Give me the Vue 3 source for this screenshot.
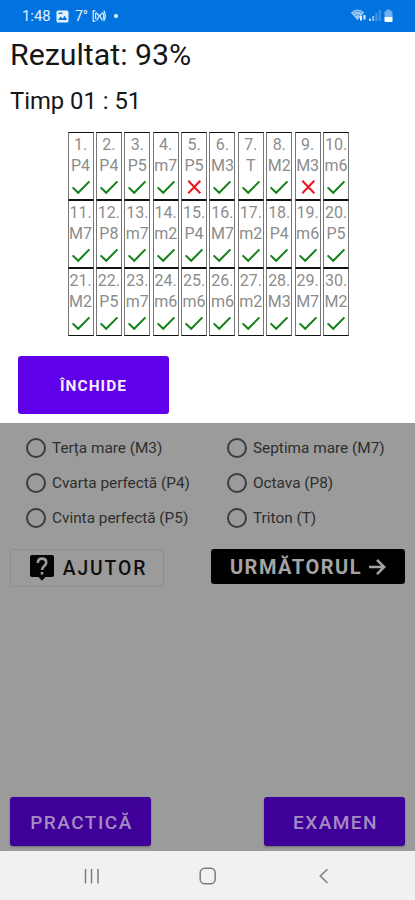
<template>
    <div class="screen">
        <header class="status-bar">
            <span class="time">1:48</span>
            <svg class="picture" viewBox="0 0 13 13">
                <rect x="0.5" y="0.5" width="12" height="12" rx="1.5" fill="#e6f0fb" />
                <path d="M2 10 L4.6 6.6 L6.6 8.8 L8.6 5.8 L11.2 10 Z" fill="#0073df" />
                <rect x="2.5" y="2.6" width="4" height="1.4" fill="#0073df" />
            </svg>
            <span class="degrees">7°</span>
            <svg class="cast" viewBox="0 0 15 12">
                <g fill="none" stroke="#d5e7fa" stroke-width="1.3">
                    <path d="M3.4 1 H1.2 V11 H3.4 M11.6 1 H12 Q14.8 6 11.6 11 M3.6 3 V9 M11 3 Q12.4 6 11 9" />
                    <path d="M4.6 10.5 L7.5 5.6 L10.4 10.5 M4 2.4 L7.5 6 L11 2.4" />
                </g>
            </svg>
            <span class="dot"></span>
            <svg class="signals" viewBox="0 0 46 16">
                <path d="M0.8 4.6 Q7.5 -1.8 14.2 4.6 L7.5 12.2 Z" fill="#9ccaf4" />
                <path d="M2.8 5.2 Q7.5 1.2 12.2 5.2 M4.8 7.6 Q7.5 5.4 10.2 7.6" fill="none" stroke="#3d93e6" stroke-width="1" />
                <path d="M11 8 V12.5 M14.5 7 V11.5" stroke="#e6f1fd" stroke-width="2" />
                <path d="M20 10.5 V13" stroke="#b9d8f7" stroke-width="2" />
                <path d="M23.2 8 V13" stroke="#8dc0f1" stroke-width="2" />
                <path d="M26.4 5 V13 M29.8 2 V13" stroke="#3d93e6" stroke-width="2.2" />
                <path d="M34.5 4 Q34.5 3 36.5 3 V1.5 H40.5 V3 Q42.5 3 42.5 4 V9.5 H34.5 Z" fill="#72b2ee" />
                <path d="M34.5 9 H42.5 V13 Q42.5 14 41.5 14 H35.5 Q34.5 14 34.5 13 Z" fill="#fff" />
            </svg>
        </header>

        <section class="dialog">
            <h1>Rezultat: 93%</h1>
            <h2>Timp 01 : 51</h2>
            <div class="results">
                <div v-for="(item, i) in results" :key="i" class="cell">
                    <span>{{ i + 1 }}.</span>
                    <span>{{ item }}</span>
                    <svg v-if="wrong.includes(i + 1)" class="mark" viewBox="0 0 20 16">
                        <path d="M4.3 1.7 L16.3 14.3 M16.3 1.7 L4.3 14.3" stroke="#f0141e" />
                    </svg>
                    <svg v-else class="mark" viewBox="0 0 20 16">
                        <path d="M1.6 8.4 L7.2 13.8 L18.4 2.4" stroke="#138019" />
                    </svg>
                </div>
            </div>
            <button class="btn close">ÎNCHIDE</button>
        </section>

        <main class="page">
            <div class="options">
                <label v-for="option in options" :key="option" class="option">
                    <span class="radio"></span>
                    <span>{{ option }}</span>
                </label>
            </div>
            <div class="actions">
                <button class="btn help">
                    <svg viewBox="0 0 24 26">
                        <path d="M2 0 H22 Q24 0 24 2 V20 Q24 22 22 22 H15.5 L12 25.8 L8.5 22 H2 Q0 22 0 20 V2 Q0 0 2 0 Z" fill="#050505" />
                        <path d="M7.8 8 Q7.8 3.6 12 3.6 Q16.2 3.6 16.2 7.4 Q16.2 9.4 14.2 11 Q12 12.8 12 15" fill="none" stroke="#9b9b9b" stroke-width="2.6" />
                        <rect x="10.7" y="17" width="2.6" height="2.6" fill="#9b9b9b" />
                    </svg>
                    <span>AJUTOR</span>
                </button>
                <button class="btn next">
                    <span>URMĂTORUL</span>
                    <svg viewBox="0 0 18 18">
                        <path d="M1 9 H16 M9 1.8 L16.2 9 L9 16.2" fill="none" stroke="#a5a5a5" stroke-width="2.5" />
                    </svg>
                </button>
            </div>
            <div class="modes">
                <button class="btn mode">PRACTICĂ</button>
                <button class="btn mode">EXAMEN</button>
            </div>
        </main>

        <nav class="nav-bar">
            <svg viewBox="0 0 20 20">
                <path d="M4.5 3 V17.5 M10.5 3 V17.5 M17 3 V17.5" />
            </svg>
            <svg viewBox="0 0 20 20">
                <rect x="2.2" y="2.2" width="15" height="15.6" rx="4.6" />
            </svg>
            <svg viewBox="0 0 20 20">
                <path d="M13.5 3.2 L6.3 10 L13.5 17" />
            </svg>
        </nav>
    </div>
</template>

<script setup>
const results = [
    'P4', 'P4', 'P5', 'm7', 'P5', 'M3', 'T', 'M2', 'M3', 'm6',
    'M7', 'P8', 'm7', 'm2', 'P4', 'M7', 'm2', 'P4', 'm6', 'P5',
    'M2', 'P5', 'm7', 'm6', 'm6', 'm6', 'm2', 'M3', 'M7', 'M2'
]
const wrong = [5, 9]

const options = [
    'Terța mare (M3)',
    'Septima mare (M7)',
    'Cvarta perfectă (P4)',
    'Octava (P8)',
    'Cvinta perfectă (P5)',
    'Triton (T)'
]
</script>

<style>
body {
    margin: 0;
}
</style>

<style scoped>
.screen {
    width: 415px;
    height: 900px;
    display: flex;
    flex-direction: column;
    overflow: hidden;
    font-family: Roboto, "Liberation Sans", sans-serif;
}

.status-bar {
    height: 32px;
    box-sizing: border-box;
    flex: none;
    display: flex;
    align-items: center;
    padding-left: 22px;
    padding-right: 19px;
    background: #0073df;
    color: #e6f1fd;

    .time {
        width: 34px;
        font-size: 14.8px;
    }

    .picture {
        width: 13px;
        height: 13px;
    }

    .degrees {
        width: 17px;
        margin-left: 6px;
        font-size: 14px;
    }

    .cast {
        width: 15px;
        height: 12px;
    }

    .dot {
        width: 4px;
        height: 4px;
        margin-left: 7px;
        border-radius: 50%;
        background: #fff;
    }

    .signals {
        width: 46px;
        height: 16px;
        margin-left: auto;
    }
}

.dialog {
    height: 391px;
    flex: none;
    background: #fff;

    h1,
    h2 {
        margin: 0;
        padding-left: 10px;
        color: #161616;
        font-weight: 400;
        white-space: nowrap;
    }

    h1 {
        padding-top: 4px;
        font-size: 30.3px;
        line-height: 38px;
    }

    h2 {
        padding-top: 11px;
        font-size: 23.8px;
        line-height: 32px;
    }
}

.results {
    display: grid;
    grid-template-columns: repeat(10, 26px);
    grid-template-rows: repeat(3, 68px);
    column-gap: 2.4px;
    margin: 15px 0 0 67.5px;

    .cell {
        box-sizing: border-box;
        display: flex;
        flex-direction: column;
        align-items: center;
        padding-top: 1px;
        border: 1px solid #777;
        border-bottom-color: #111;
        border-top-color: #111;
        color: #8c8c8c;
        font-size: 16px;
        line-height: 21px;
    }

    .mark {
        width: 20px;
        height: 16px;
        margin-top: 3px;
        fill: none;
        stroke-width: 2;
    }
}

.btn {
    display: flex;
    align-items: center;
    justify-content: center;
    box-sizing: border-box;
    padding: 0;
    border: none;
    border-radius: 3px;
    font-family: inherit;
    font-weight: 500;
    white-space: nowrap;
}

.close {
    width: 151px;
    height: 58px;
    margin: 19.5px 0 0 18px;
    background: #6000ea;
    color: #f5efff;
    font-size: 15.4px;
    font-weight: 700;
    letter-spacing: 1.1px;
    padding-top: 2px;
}

.page {
    height: 428px;
    box-sizing: border-box;
    flex: none;
    display: flex;
    flex-direction: column;
    padding: 7px 10px 5px;
    background: #9b9b9b;
}

.options {
    display: grid;
    grid-template-columns: 201px 1fr;
    grid-template-rows: repeat(3, 35px);
    padding-left: 16px;

    .option {
        display: flex;
        align-items: center;
        gap: 6px;
        color: #2e2e2e;
        font-size: 15.35px;
        white-space: nowrap;

        span:last-child {
            padding-top: 1px;
        }
    }

    .radio {
        width: 20px;
        height: 20px;
        box-sizing: border-box;
        border: 2px solid #3c3c3c;
        border-radius: 50%;
    }
}

.actions {
    display: flex;
    justify-content: space-between;
    align-items: flex-start;
    margin-top: 14px;

    .help {
        width: 154px;
        height: 38px;
        gap: 9px;
        padding-left: 3px;
        border: 1px solid #8e8e8e;
        background: #9b9b9b;
        color: #101010;
        font-size: 19.3px;
        letter-spacing: 1.9px;

        svg {
            width: 24px;
            height: 26px;
        }
    }

    .next {
        width: 194px;
        height: 35px;
        gap: 6px;
        background: #000;
        color: #a5a5a5;
        font-size: 20px;
        font-weight: 700;
        letter-spacing: 1.5px;

        svg {
            width: 18px;
            height: 18px;
        }
    }
}

.modes {
    display: flex;
    justify-content: space-between;
    margin-top: auto;

    .mode {
        width: 141px;
        height: 49px;
        background: #3e0098;
        color: #a58bc2;
        font-size: 19px;
        letter-spacing: 1.5px;
        padding-top: 2px;
        padding-left: 2px;
        box-shadow: 0 1px 2px rgba(0, 0, 0, 0.3);
    }
}

.nav-bar {
    flex: 1;
    display: flex;
    justify-content: space-between;
    align-items: center;
    padding: 0 81px;
    background: #f1f1f1;

    svg {
        width: 20px;
        height: 20px;
        fill: none;
        stroke: #7c7c7c;
        stroke-width: 1.5;
    }
}
</style>
